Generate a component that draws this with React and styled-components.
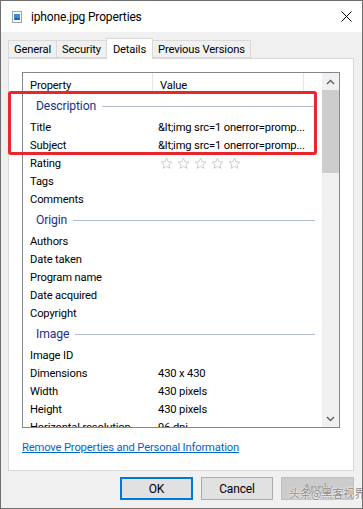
import React from 'react';
import styled, { createGlobalStyle } from 'styled-components';

const GlobalStyle = createGlobalStyle`
  html, body { margin: 0; padding: 0; background: #f0f0f0; }
  body {
    font-family: Roboto, "Liberation Sans", Arial, sans-serif;
    font-size: 11.2px;
    letter-spacing: -0.15px;
  }
`;

const Window = styled.div`
  position: relative;
  width: 363px;
  height: 509px;
  box-sizing: border-box;
  border: 1px solid #6f6f6f;
  background: #f0f0f0;
  display: flex;
  flex-direction: column;
  overflow: hidden;
`;

const TitleBar = styled.div`
  height: 31px;
  background: #fff;
  display: flex;
  align-items: center;
  padding: 0 10px 0 11px;
  flex-shrink: 0;
`;

const TitleText = styled.div`
  flex: 1;
  margin-left: 9px;
  font-size: 12px;
  color: #000;
`;

const TabStrip = styled.div`
  display: flex;
  align-items: flex-end;
  height: 18px;
  margin-top: 8px;
  padding-left: 7px;
  position: relative;
  z-index: 1;
`;

const Tab = styled.div`
  height: ${({ active }) => (active ? '21px' : '18px')};
  box-sizing: border-box;
  padding: 0 ${({ active }) => (active ? '6px' : '5px')};
  margin-bottom: ${({ active }) => (active ? '-1px' : '0')};
  border: 1px solid #d9d9d9;
  border-bottom: ${({ active }) => (active ? 'none' : '1px solid #d9d9d9')};
  margin-left: -1px;
  background: ${({ active }) => (active ? '#fff' : '#f0f0f0')};
  display: flex;
  align-items: center;
  color: #000;
  white-space: nowrap;
  &:first-child { margin-left: 0; }
`;

const Panel = styled.div`
  margin: 0 8px 0 7px;
  height: 413px;
  box-sizing: border-box;
  background: #fff;
  border: 1px solid #d9d9d9;
  padding: 13px 13px 0 13px;
  display: flex;
  flex-direction: column;
`;

const ListBox = styled.div`
  height: 356px;
  box-sizing: border-box;
  border: 1px solid #828790;
  display: flex;
  overflow: hidden;
`;

const ListContent = styled.div`
  flex: 1;
  overflow: hidden;
`;

const HeaderRow = styled.div`
  display: flex;
  height: 21px;
`;

const HeaderCell = styled.div`
  width: ${({ w }) => w}px;
  box-sizing: border-box;
  padding-left: 7px;
  display: flex;
  align-items: center;
  border-right: 1px solid #e5e5e5;
  padding-top: 3px;
`;

const Row = styled.div`
  display: flex;
  height: 18px;
  align-items: center;
`;

const Label = styled.div`
  width: 130px;
  padding-left: 7px;
  box-sizing: border-box;
  white-space: nowrap;
  overflow: hidden;
`;

const Value = styled.div`
  padding-left: 5px;
  white-space: nowrap;
`;

const GroupRow = styled.div`
  display: flex;
  align-items: center;
  height: 24px;
  padding: 0 7px 0 13px;
  color: #1e3287;
  font-size: 12.2px;
`;

const GroupLine = styled.div`
  flex: 1;
  height: 1px;
  background: #b3bccc;
  margin-left: 6px;
`;

const Stars = styled.div`
  display: flex;
  gap: 4px;
  padding-left: 7px;
`;

const ScrollBar = styled.div`
  width: 17px;
  background: #f0f0f0;
  display: flex;
  flex-direction: column;
  flex-shrink: 0;
`;

const ScrollArrow = styled.div`
  height: 17px;
  display: flex;
  align-items: center;
  justify-content: center;
`;

const ScrollTrack = styled.div`
  flex: 1;
`;

const Thumb = styled.div`
  height: 83px;
  background: #cdcdcd;
`;

const Link = styled.a`
  color: #0066cc;
  text-decoration: underline;
  margin-top: 13px;
  align-self: flex-start;
`;

const ButtonRow = styled.div`
  display: flex;
  justify-content: flex-end;
  gap: 8px;
  padding: 6px 8px 0 0;
`;

const Button = styled.div`
  width: ${({ w }) => w || 73}px;
  height: 23px;
  box-sizing: border-box;
  display: flex;
  align-items: center;
  justify-content: center;
  font-size: 12px;
  background: ${({ disabled }) => (disabled ? '#cccccc' : '#e1e1e1')};
  color: ${({ disabled }) => (disabled ? '#a0a0a0' : '#000')};
  border: ${({ primary, disabled }) =>
    primary ? '2px solid #0078d7' : disabled ? '1px solid #bfbfbf' : '1px solid #adadad'};
`;

const Highlight = styled.div`
  position: absolute;
  left: 7px;
  top: 90px;
  width: 309px;
  height: 64px;
  box-sizing: border-box;
  border: 3px solid #e8262b;
  border-radius: 3px;
  pointer-events: none;
`;

const Watermark = styled.div`
  position: absolute;
  left: 288px;
  top: 484px;
  font-family: "Noto Sans CJK SC", sans-serif;
  font-size: 11px;
  letter-spacing: 0;
  color: #8a8a8a;
  text-shadow: 0 0 2px #fff, 0 0 2px #fff;
  white-space: nowrap;
`;

const FileIcon = () => (
  <svg width="10" height="12" viewBox="0 0 10 12">
    <rect x="0.5" y="0.5" width="9" height="11" fill="#fff" stroke="#9aa4b0" />
    <rect x="2" y="3" width="6" height="6" fill="#3c8ddc" />
    <path d="M2 9 L4 6 L5.5 7.5 L6.5 6.5 L8 9 Z" fill="#1a5fa8" />
  </svg>
);

const CloseIcon = () => (
  <svg width="11" height="11" viewBox="0 0 11 11">
    <path d="M0.5 0.5 L10.5 10.5 M10.5 0.5 L0.5 10.5" stroke="#000" strokeWidth="1" />
  </svg>
);

const Star = () => (
  <svg width="13" height="13" viewBox="0 0 24 24">
    <path
      d="M12 2 L14.9 8.6 L22 9.3 L16.6 14 L18.2 21 L12 17.3 L5.8 21 L7.4 14 L2 9.3 L9.1 8.6 Z"
      fill="none"
      stroke="#c4c4c4"
      strokeWidth="1.6"
      strokeLinejoin="round"
    />
  </svg>
);

const Chevron = ({ down }) => (
  <svg width="9" height="6" viewBox="0 0 9 6" style={{ transform: down ? 'rotate(180deg)' : 'none' }}>
    <path d="M1 5 L4.5 1.5 L8 5" fill="none" stroke="#606060" strokeWidth="1.4" />
  </svg>
);

const xss = '&lt;img src=1 onerror=promp...';

const groups = [
  {
    name: 'Description',
    rows: [
      ['Title', xss],
      ['Subject', xss],
      ['Rating', 'stars'],
      ['Tags', ''],
      ['Comments', ''],
    ],
  },
  {
    name: 'Origin',
    rows: [
      ['Authors', ''],
      ['Date taken', ''],
      ['Program name', ''],
      ['Date acquired', ''],
      ['Copyright', ''],
    ],
  },
  {
    name: 'Image',
    rows: [
      ['Image ID', ''],
      ['Dimensions', '430 x 430'],
      ['Width', '430 pixels'],
      ['Height', '430 pixels'],
      ['Horizontal resolution', '96 dpi'],
    ],
  },
];

export default function App() {
  return (
    <>
      <GlobalStyle />
      <Window>
        <TitleBar>
          <FileIcon />
          <TitleText>iphone.jpg Properties</TitleText>
          <CloseIcon />
        </TitleBar>

        <TabStrip>
          <Tab>General</Tab>
          <Tab>Security</Tab>
          <Tab active>Details</Tab>
          <Tab>Previous Versions</Tab>
        </TabStrip>

        <Panel>
          <ListBox>
            <ListContent>
              <HeaderRow>
                <HeaderCell w={130}>Property</HeaderCell>
                <HeaderCell w={151}>Value</HeaderCell>
              </HeaderRow>
              {groups.map((g) => (
                <React.Fragment key={g.name}>
                  <GroupRow>
                    {g.name}
                    <GroupLine />
                  </GroupRow>
                  {g.rows.map(([label, value]) => (
                    <Row key={label}>
                      <Label>{label}</Label>
                      {value === 'stars' ? (
                        <Stars>
                          {[0, 1, 2, 3, 4].map((i) => (
                            <Star key={i} />
                          ))}
                        </Stars>
                      ) : (
                        <Value>{value}</Value>
                      )}
                    </Row>
                  ))}
                </React.Fragment>
              ))}
            </ListContent>
            <ScrollBar>
              <ScrollArrow>
                <Chevron />
              </ScrollArrow>
              <ScrollTrack>
                <Thumb />
              </ScrollTrack>
              <ScrollArrow>
                <Chevron down />
              </ScrollArrow>
            </ScrollBar>
          </ListBox>
          <Link>Remove Properties and Personal Information</Link>
        </Panel>

        <ButtonRow>
          <Button primary>OK</Button>
          <Button w={72}>Cancel</Button>
          <Button disabled>Apply</Button>
        </ButtonRow>

        <Highlight />
        <Watermark>头条@黑客视界</Watermark>
      </Window>
    </>
  );
}
